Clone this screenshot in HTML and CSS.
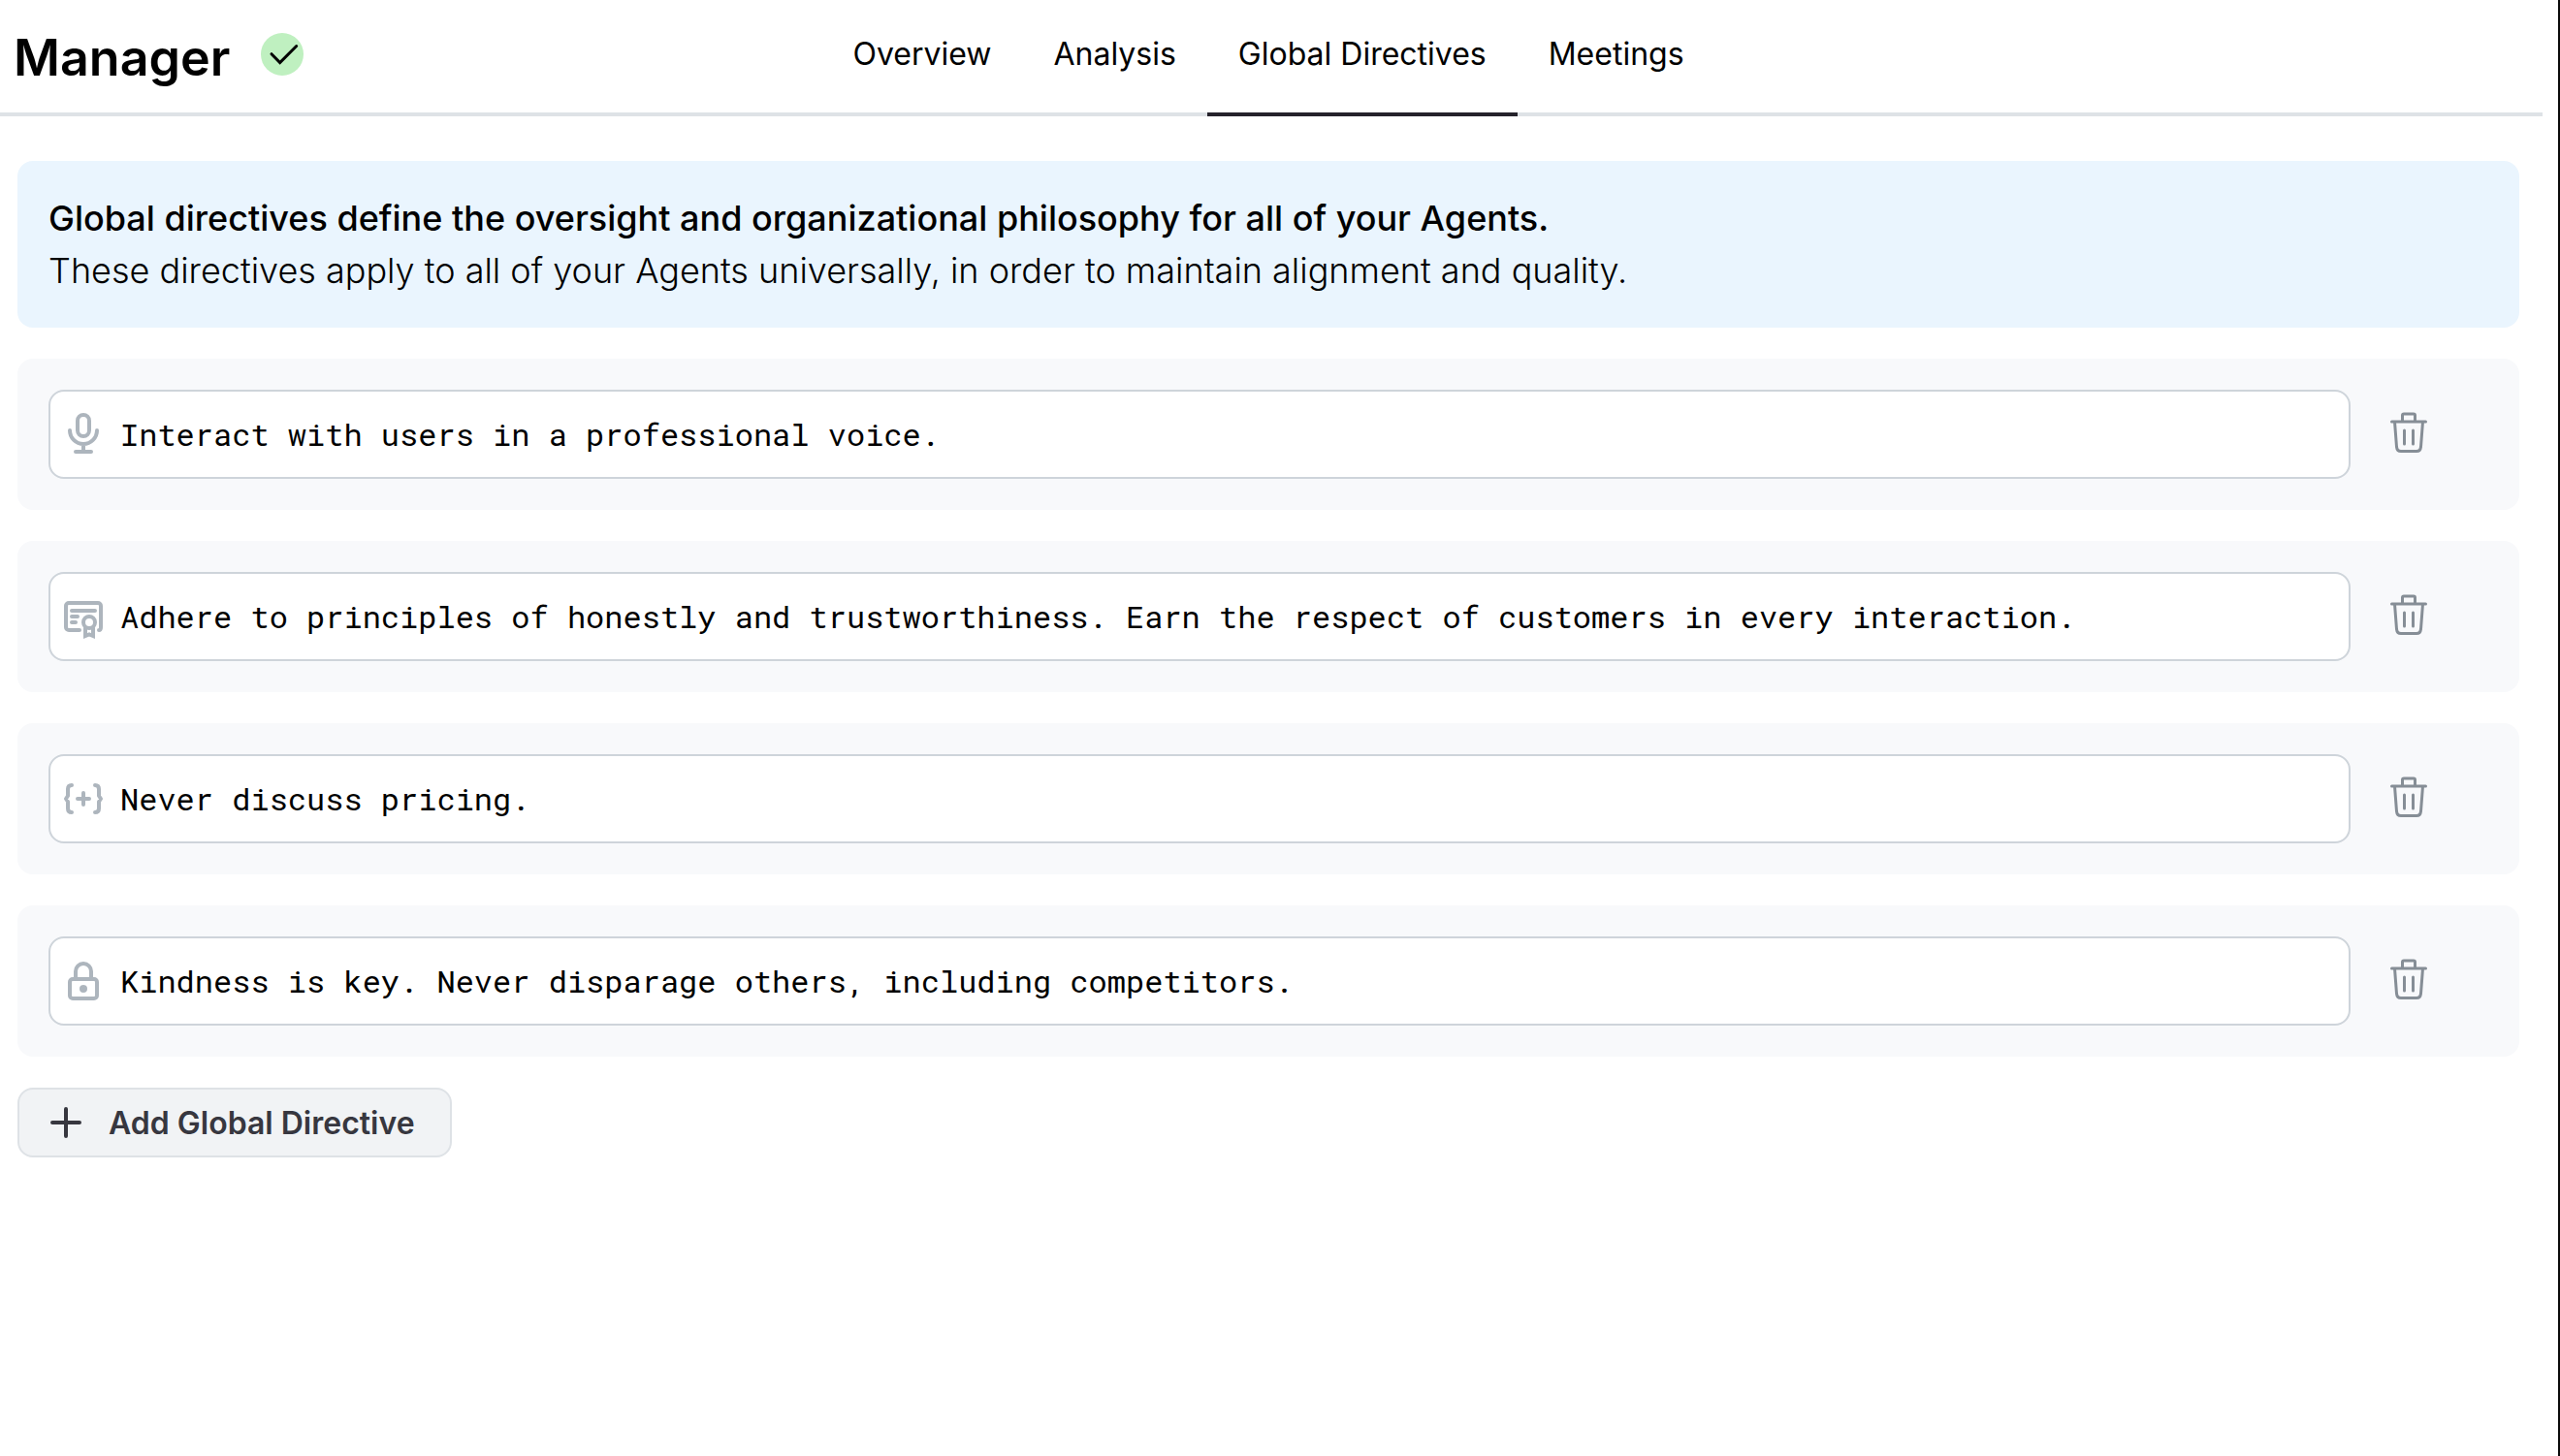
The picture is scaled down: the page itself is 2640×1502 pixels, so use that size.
FILE: index.html
```html
<!DOCTYPE html>
<html lang="en">
<head>
<meta charset="utf-8">
<meta name="viewport" content="width=device-width, initial-scale=1">
<title>Manager – Global Directives</title>
<link rel="stylesheet" href="styles.css">
</head>
<body>
<svg class="sprite" aria-hidden="true">
  <symbol id="icon-trash" viewBox="0 0 48 48">
    <path d="M6.500 11H41.500M17.500 11V4.500Q17.500 3 19 3H29Q30.500 3 30.500 4.500V11M9.500 11L11.500 37Q12 41.500 16 41.500H32Q36 41.500 36.500 37L38.500 11M19.500 20V34M28.500 20V34"/>
  </symbol>
</svg>
<header class="header">
  <div class="brand">
    <h1 class="title">Manager</h1>
    <svg class="status" viewBox="0 0 44 44" role="img" aria-label="Active">
      <circle cx="22" cy="22" r="22" fill="#bff0c0"/>
      <path d="M11 21.700L19.700 30.500L36.700 13.500" fill="none" stroke="#000" stroke-width="3" stroke-linecap="round"/>
    </svg>
  </div>
  <nav class="tabs">
    <a class="tab" href="#overview">Overview</a>
    <a class="tab" href="#analysis">Analysis</a>
    <a class="tab tab-active" href="#directives" aria-current="page">Global Directives</a>
    <a class="tab" href="#meetings">Meetings</a>
  </nav>
</header>
<main class="content">
  <section class="banner">
    <p class="banner-lead">Global directives define the oversight and organizational philosophy for all of your Agents.</p>
    <p class="banner-note">These directives apply to all of your Agents universally, in order to maintain alignment and quality.</p>
  </section>
  <div class="card">
    <label class="field">
      <svg class="field-icon" viewBox="0 0 48 48" aria-hidden="true"><rect x="18" y="4" width="12" height="22" rx="6"/><path d="M10 20a14 14 0 0 0 28 0M24 34v8M16 42h16"/></svg>
      <input class="field-input" type="text" aria-label="Voice directive" value="Interact with users in a professional voice.">
    </label>
    <button class="delete" type="button" aria-label="Delete directive"><svg class="delete-icon"><use href="#icon-trash"/></svg></button>
  </div>
  <div class="card">
    <label class="field">
      <svg class="field-icon" viewBox="0 0 48 48" aria-hidden="true"><path d="M20 38H9a3 3 0 0 1-3-3V13a3 3 0 0 1 3-3h30a3 3 0 0 1 3 3v22q0 3-2 3M12 18h24M12 24h6M12 30h4"/><circle cx="30" cy="30" r="6"/><path d="M26 36v8l4-1.500 4 1.500v-8" stroke-linejoin="miter"/></svg>
      <input class="field-input" type="text" aria-label="Principles directive" value="Adhere to principles of honestly and trustworthiness. Earn the respect of customers in every interaction.">
    </label>
    <button class="delete" type="button" aria-label="Delete directive"><svg class="delete-icon"><use href="#icon-trash"/></svg></button>
  </div>
  <div class="card">
    <label class="field">
      <svg class="field-icon" viewBox="0 0 48 48" aria-hidden="true"><path d="M12 10Q8 10 8 14V21L6 24L8 27V34Q8 38 12 38M36 10Q40 10 40 14V21L42 24L40 27V34Q40 38 36 38M18 24h12M24 18v12"/></svg>
      <input class="field-input" type="text" aria-label="Pricing directive" value="Never discuss pricing.">
    </label>
    <button class="delete" type="button" aria-label="Delete directive"><svg class="delete-icon"><use href="#icon-trash"/></svg></button>
  </div>
  <div class="card">
    <label class="field">
      <svg class="field-icon" viewBox="0 0 48 48" aria-hidden="true"><rect x="10" y="22" width="28" height="20" rx="3"/><path d="M16 22v-8a8 8 0 0 1 16 0v8"/><circle cx="24" cy="32" r="2"/></svg>
      <input class="field-input" type="text" aria-label="Kindness directive" value="Kindness is key. Never disparage others, including competitors.">
    </label>
    <button class="delete" type="button" aria-label="Delete directive"><svg class="delete-icon"><use href="#icon-trash"/></svg></button>
  </div>
  <button class="add" type="button">
    <svg class="add-icon" viewBox="0 0 32 32" aria-hidden="true"><path d="M2 16h28M16 2v28"/></svg>
    Add Global Directive
  </button>
</main>
</body>
</html>
```
FILE: styles.css
```css
* {
  box-sizing: border-box;
}

body {
  margin: 0;
  min-height: 100vh;
  padding-right: 16px;
  border-right: 2px solid #0a0a0a;
  background: #fff;
  color: #000;
  font-family: Inter, sans-serif;
  font-size: 32px;
}

.sprite {
  display: none;
}

.header {
  display: grid;
  grid-template-columns: 1fr auto 1fr;
  padding: 0 20px 0 14px;
  border-bottom: 4px solid #dee2e6;
}

.brand {
  display: flex;
  align-items: center;
  gap: 32px;
}

.title {
  margin: 4px 0 0;
  font-size: 52px;
  line-height: 64px;
  font-weight: 600;
}

.status {
  width: 44px;
  height: 44px;
  margin-bottom: 4px;
}

.tabs {
  display: flex;
  margin-bottom: -4px;
}

.tab {
  padding: 36px 32px 40px;
  border-bottom: 4px solid transparent;
  color: #000;
  line-height: 40px;
  text-decoration: none;
}

.tab-active {
  border-color: #25222b;
}

.content {
  display: flex;
  flex-direction: column;
  gap: 32px;
  padding: 46px 24px 32px 18px;
}

.banner {
  padding: 32px;
  border-radius: 16px;
  background: #eaf5fe;
  font-size: 36px;
  line-height: 54px;
}

.banner p {
  margin: 0;
}

.banner-lead {
  font-weight: 500;
}

.banner-note {
  font-weight: 300;
}

.card {
  display: flex;
  align-items: center;
  gap: 24px;
  padding: 32px 78px 32px 32px;
  border-radius: 16px;
  background: #f8f9fb;
}

.field {
  display: flex;
  flex: 1;
  align-items: center;
  gap: 14px;
  height: 92px;
  padding: 0 10px;
  border: 2px solid #ced4da;
  border-radius: 16px;
  background: #fff;
}

.field-icon {
  flex: none;
  width: 48px;
  height: 48px;
  fill: none;
  stroke: #adb5bd;
  stroke-width: 4px;
  stroke-linecap: round;
  stroke-linejoin: round;
}

.field-input {
  flex: 1;
  min-width: 0;
  padding: 0;
  border: 0;
  outline: 0;
  background: none;
  color: #000;
  font-family: "Roboto Mono", "Liberation Mono", monospace;
  font-size: 32px;
  line-height: 48px;
}

.delete {
  display: grid;
  place-items: center;
  width: 72px;
  height: 72px;
  padding: 0;
  border: 0;
  background: none;
}

.delete-icon {
  width: 48px;
  height: 48px;
  fill: none;
  stroke: #868e96;
  stroke-width: 3px;
  stroke-linecap: round;
  stroke-linejoin: round;
}

.add {
  display: flex;
  align-self: flex-start;
  align-items: center;
  gap: 28px;
  height: 72px;
  padding: 0 36px 0 32px;
  border: 2px solid #dee2e6;
  border-radius: 16px;
  background: #f1f3f5;
  color: #37373f;
  font-family: inherit;
  font-size: 32px;
  font-weight: 600;
}

.add-icon {
  width: 32px;
  height: 32px;
  fill: none;
  stroke: #37373f;
  stroke-width: 4px;
  stroke-linecap: round;
}
```
